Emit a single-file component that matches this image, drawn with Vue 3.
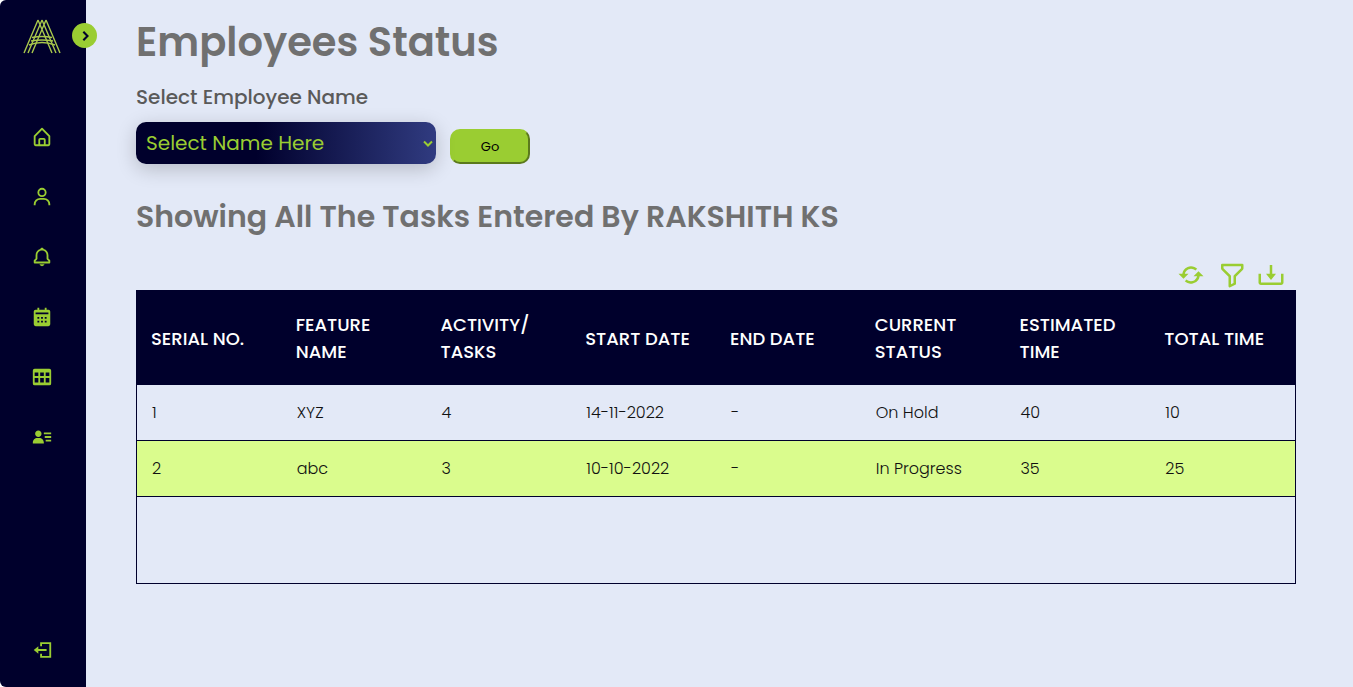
<template>
  <div class="app">
    <aside class="sidebar">
      <a href="#" class="logo" aria-label="Home page">
        <svg width="38" height="36" viewBox="0 0 38 36" fill="none" stroke="#a9c84c" stroke-width="1.4">
          <path d="M15 1 1 34M19 1 5 34M23 1 9 34M15 1l14 33M19 1l14 33M23 1l14 33" />
          <path d="M9 18.500q10-2 20 0M8 22q11-2 22 0M6 26q13-5 26 0" />
        </svg>
      </a>
      <button class="toggle" type="button" aria-label="Expand menu">
        <svg width="20" height="20" viewBox="0 0 24 24"><path d="m10 7 5 5-5 5" fill="none" stroke="#00002c" stroke-width="2.5" /></svg>
      </button>
      <nav>
        <a v-for="item in items" :key="item.name" href="#" :aria-label="item.name">
          <svg class="icon" viewBox="0 0 24 24"><path :d="item.path" fill-rule="evenodd" /></svg>
        </a>
      </nav>
      <a href="#" class="logout" aria-label="Log out">
        <svg class="icon" viewBox="0 0 24 24"><path d="m3 12 5-4v3h9v2H8v3zM10 3.500h12v17H10V16h2v2.500h8v-13h-8V8h-2z" /></svg>
      </a>
    </aside>
    <main>
      <h1>Employees Status</h1>
      <label for="employee">Select Employee Name</label>
      <form class="picker" @submit.prevent>
        <div class="select">
          <select id="employee">
            <option>Select Name Here</option>
          </select>
          <svg width="10" height="8" viewBox="0 0 10 8"><path d="m1 1.500 4 4 4-4" fill="none" stroke="#9acd32" stroke-width="2" /></svg>
        </div>
        <button class="go" type="submit">Go</button>
      </form>
      <h2>Showing All The Tasks Entered By RAKSHITH KS</h2>
      <div class="tools">
        <button v-for="tool in tools" :key="tool.name" type="button" :aria-label="tool.name">
          <svg viewBox="0 0 24 24"><path :d="tool.path" /></svg>
        </button>
      </div>
      <div class="panel">
        <table>
          <thead>
            <tr><th v-for="h in headers" :key="h" scope="col">{{ h }}</th></tr>
          </thead>
          <tbody>
            <tr v-for="row in rows" :key="row[0]"><td v-for="(cell, i) in row" :key="i">{{ cell }}</td></tr>
          </tbody>
        </table>
      </div>
    </main>
  </div>
</template>

<script setup>
const headers = ['SERIAL NO.', 'FEATURE NAME', 'ACTIVITY/ TASKS', 'START DATE', 'END DATE', 'CURRENT STATUS', 'ESTIMATED TIME', 'TOTAL TIME']
const rows = [
  ['1', 'XYZ', '4', '14-11-2022', '-', 'On Hold', '40', '10'],
  ['2', 'abc', '3', '10-10-2022', '-', 'In Progress', '35', '25'],
]
const items = [
  { name: 'Home', path: 'M5 22h14a2 2 0 0 0 2-2v-9a1 1 0 0 0-.29-.71l-8-8a1 1 0 0 0-1.41 0l-8 8A1 1 0 0 0 3 11v9a2 2 0 0 0 2 2zm5-2v-5h4v5zm-5-8.590 7-7 7 7V20h-3v-5a2 2 0 0 0-2-2h-4a2 2 0 0 0-2 2v5H5z' },
  { name: 'Profile', path: 'M12 2a5 5 0 1 0 5 5 5 5 0 0 0-5-5zm0 8a3 3 0 1 1 3-3 3 3 0 0 1-3 3zm9 11v-1a7 7 0 0 0-7-7h-4a7 7 0 0 0-7 7v1h2v-1a5 5 0 0 1 5-5h4a5 5 0 0 1 5 5v1z' },
  { name: 'Notifications', path: 'M19 13.586V10c0-3.217-2.185-5.927-5.145-6.742C13.562 2.520 12.846 2 12 2s-1.562.52-1.855 1.258C7.185 4.074 5 6.783 5 10v3.586l-1.707 1.707A.996.996 0 0 0 3 16v2a1 1 0 0 0 1 1h16a1 1 0 0 0 1-1v-2a.996.996 0 0 0-.293-.707L19 13.586zM19 17H5v-.586l1.707-1.707A.996.996 0 0 0 7 14v-4c0-2.757 2.243-5 5-5s5 2.243 5 5v4c0 .266.105.52.293.707L19 16.414V17zm-7 5a2.980 2.980 0 0 0 2.818-2H9.182A2.980 2.980 0 0 0 12 22z' },
  { name: 'Calendar', path: 'M7 2h2v2h6V2h2v2h2a2 2 0 0 1 2 2v14a2 2 0 0 1-2 2H5a2 2 0 0 1-2-2V6a2 2 0 0 1 2-2h2zM5 7v2h14V7zM7 12v2h2v-2zM11 12v2h2v-2zM15 12v2h2v-2zM7 16v2h2v-2zM11 16v2h2v-2zM15 16v2h2v-2z' },
  { name: 'Table', path: 'M4 3h16a2 2 0 0 1 2 2v14a2 2 0 0 1-2 2H4a2 2 0 0 1-2-2V5a2 2 0 0 1 2-2zM4 7v4h4V7zM10 7v4h4V7zM16 7v4h4V7zM4 13v5h4v-5zM10 13v5h4v-5zM16 13v5h4v-5z' },
  { name: 'Employees', path: 'M15 11h7v2h-7zM16 15h6v2h-6zM14 7h8v2h-8zM4 19h10v-1c0-2.757-2.243-5-5-5H7c-2.757 0-5 2.243-5 5v1zM8 12c1.995 0 3.500-1.505 3.500-3.500S9.995 5 8 5 4.500 6.505 4.500 8.500 6.005 12 8 12z' },
]
const tools = [
  { name: 'Refresh', path: 'M10 11H7.101l.001-.009a4.956 4.956 0 0 1 .752-1.787 5.054 5.054 0 0 1 2.200-1.811c.302-.128.617-.226.938-.291a5.078 5.078 0 0 1 2.018 0 4.978 4.978 0 0 1 2.525 1.361l1.416-1.412a7.036 7.036 0 0 0-2.224-1.501 6.921 6.921 0 0 0-1.315-.408 7.079 7.079 0 0 0-2.819 0 6.940 6.940 0 0 0-1.316.409 7.040 7.040 0 0 0-3.080 2.534 6.978 6.978 0 0 0-1.054 2.505c-.028.135-.043.273-.063.41H2l4 4 4-4zm4 2h2.899l-.001.008a4.976 4.976 0 0 1-2.103 3.138 4.943 4.943 0 0 1-1.787.752 5.073 5.073 0 0 1-2.017 0 4.956 4.956 0 0 1-1.787-.752 5.072 5.072 0 0 1-.74-.61L7.050 16.950a7.032 7.032 0 0 0 2.225 1.500c.424.18.867.317 1.315.408a7.070 7.070 0 0 0 2.818 0 7.031 7.031 0 0 0 4.395-2.945 6.974 6.974 0 0 0 1.053-2.503c.027-.135.043-.273.063-.41H22l-4-4-4 4z' },
  { name: 'Filter', path: 'M21 3H5a1 1 0 0 0-1 1v2.590c0 .523.213 1.037.583 1.407L10 13.414V21a1.001 1.001 0 0 0 1.447.895l4-2c.339-.17.553-.516.553-.895v-5.586l5.417-5.417c.37-.37.583-.884.583-1.407V4a1 1 0 0 0-1-1zm-6.707 9.293A.996.996 0 0 0 14 13v5.382l-2 1V13a.996.996 0 0 0-.293-.707L6 6.590V5h14.001l.002 1.583-5.710 5.710z' },
  { name: 'Download', path: 'm12 16 4-5h-3V4h-2v7H8zM20 18H4v-7H2v7c0 1.103.897 2 2 2h16c1.103 0 2-.897 2-2v-7h-2v7z' },
]
</script>

<style>
body { margin: 0; background: #fff; }
</style>

<style scoped>
* { box-sizing: border-box; }
.app { display: flex; min-height: 100vh; background: #e3e9f7; border-radius: 6px 0 0 6px; font-family: Poppins, Inter, sans-serif; color: #111; }
button, select { font-family: inherit; cursor: pointer; }
svg { display: block; }
.sidebar { position: relative; display: flex; flex-direction: column; align-items: center; flex: 0 0 86px; padding: 19px 2px 26px 0; background: #00002c; border-radius: 6px 0 0 6px; }
.toggle { position: absolute; top: 23px; right: -11px; display: grid; place-items: center; width: 25px; height: 25px; padding: 0; border: 0; border-radius: 50%; background: #9acd32; }
nav { display: flex; flex-direction: column; gap: 38px; margin-top: 71px; }
.icon { width: 22px; height: 22px; fill: #9acd32; }
.logout { margin-top: auto; }
main { flex: 1; min-width: 0; padding: 12px 57px 40px 50px; }
h1 { margin: 0; font-size: 40px; line-height: 60px; font-weight: 600; color: #707070; }
label { display: block; margin-top: 10px; font-size: 20px; line-height: 30px; font-weight: 500; color: #5a5a5a; }
.picker { display: flex; align-items: flex-end; gap: 14px; margin-top: 10px; }
.select { position: relative; width: 300px; }
select { appearance: none; width: 100%; height: 42px; padding: 0 10px; border: 0; border-radius: 10px; background: linear-gradient(to right, #00002c 40%, #303b80); color: #9acd32; font-size: 20px; box-shadow: 0 5px 20px rgba(0, 0, 0, 0.2); }
.select svg { position: absolute; right: 3px; top: 18px; pointer-events: none; }
.go { width: 80px; height: 35px; border: 2px outset #9acd32; border-radius: 10px; background: #9acd32; font-size: 13px; color: #000; }
h2 { margin: 30px 0 0; font-size: 30px; line-height: 45px; font-weight: 600; color: #707070; }
.tools { display: flex; justify-content: flex-end; gap: 10px; margin-top: 21px; padding-right: 10px; }
.tools button { padding: 0; border: 0; background: none; }
.tools svg { width: 30px; height: 30px; fill: #9acd32; }
.panel { min-height: 294px; border: 1px solid #00002c; }
table { width: 100%; table-layout: fixed; border-collapse: separate; border-spacing: 0; }
th { height: 94px; padding: 0 14px; background: #00002c; color: #fff; font-size: 18px; line-height: 27px; font-weight: 500; text-align: left; }
td { height: 56px; padding: 0 15px; border-bottom: 1px solid #00002c; font-size: 16px; font-weight: 300; }
tbody tr:nth-child(even) { background: #dafc8d; }
</style>
